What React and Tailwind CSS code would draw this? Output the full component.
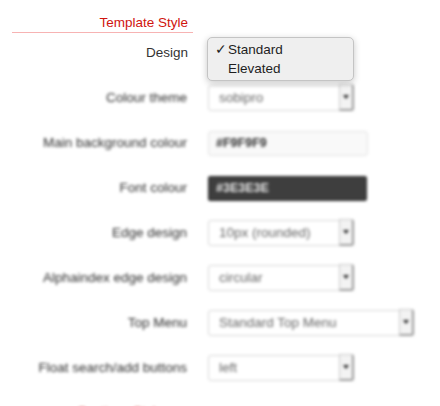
import React from "react";

const font = { fontFamily: '"Liberation Sans", Arial, Helvetica, sans-serif' };

function Arrow() {
  return (
    <div className="flex h-[27px] w-[15px] items-center justify-center rounded-r-[3px] border border-[#c9c9c9] border-r-[2px] border-b-[2px] border-r-[#9a9a9a] border-b-[#9a9a9a] bg-[#f3f3f3] -mt-[1px] -mr-[1px]">
      <div className="h-0 w-0 border-l-[3px] border-r-[3px] border-t-[4px] border-l-transparent border-r-transparent border-t-[#222]" />
    </div>
  );
}

function Select({ value, wide }) {
  return (
    <div
      className={`flex h-[26px] items-center justify-between rounded-[3px] border border-[#d6d6d6] bg-white ${wide ? "w-[206px]" : "w-[146px]"}`}
    >
      <span className="pl-[10px] text-[13.5px] text-[#666]">{value}</span>
      <Arrow />
    </div>
  );
}

function Row({ label, children }) {
  return (
    <div className="flex h-[26px] items-center">
      <div className="w-[188px] pr-[1px] text-right text-[13.5px] text-[#2e2e2e]">{label}</div>
      <div className="ml-[20px]">{children}</div>
    </div>
  );
}

export default function App() {
  return (
    <div className="relative h-[406px] w-[440px] overflow-hidden bg-white" style={font}>
      <div className="ml-[12px] w-[181px] border-b border-[#f7b3b3] pt-[14px] pr-[5px] text-right text-[13.5px] leading-[18px] text-[#d0150f]">
        Template Style
      </div>

      <div className="pt-[7px]">
        <div className="flex h-[26px] items-center">
          <div className="w-[188px] text-right text-[13.5px] text-[#333]">Design</div>
        </div>
      </div>

      <div className="blur-[1.4px]">
        <div className="mt-[19px] flex flex-col gap-[19px]">
          <Row label="Colour theme">
            <Select value="sobipro" />
          </Row>
          <Row label="Main background colour">
            <div className="flex h-[25px] w-[160px] items-center rounded-[3px] border border-[#e2e2e2] bg-[#f9f9f9] pl-[7px] text-[12.5px] font-bold text-[#333]">
              #F9F9F9
            </div>
          </Row>
          <Row label="Font colour">
            <div className="flex h-[25px] w-[159px] items-center rounded-[2px] border border-[#2c2c2c] bg-[#3e3e3e] pl-[7px] text-[12.5px] font-bold text-[#e8e8e8]">
              #3E3E3E
            </div>
          </Row>
          <Row label="Edge design">
            <Select value="10px (rounded)" />
          </Row>
          <Row label="Alphaindex edge design">
            <Select value="circular" />
          </Row>
          <Row label="Top Menu">
            <Select value="Standard Top Menu" wide />
          </Row>
          <Row label="Float search/add buttons">
            <Select value="left" />
          </Row>
        </div>
        <div className="mt-[21px] ml-[12px] w-[181px] pr-[30px] text-right text-[13.5px] leading-[19px] text-[#d0150f]">
          Sections Style
        </div>
      </div>

      <div className="absolute left-[207px] top-[37px] w-[147px] rounded-[5px] border border-[#c4c4c4] bg-[#efefef] py-[2px] text-[13.5px] leading-[19px] text-[#1e1e1e] shadow-[0_2px_7px_rgba(0,0,0,0.22)]">
        <div className="flex">
          <span className="w-[20px] pl-[7px]">✓</span>
          <span>Standard</span>
        </div>
        <div className="flex">
          <span className="w-[20px]" />
          <span>Elevated</span>
        </div>
      </div>
    </div>
  );
}
